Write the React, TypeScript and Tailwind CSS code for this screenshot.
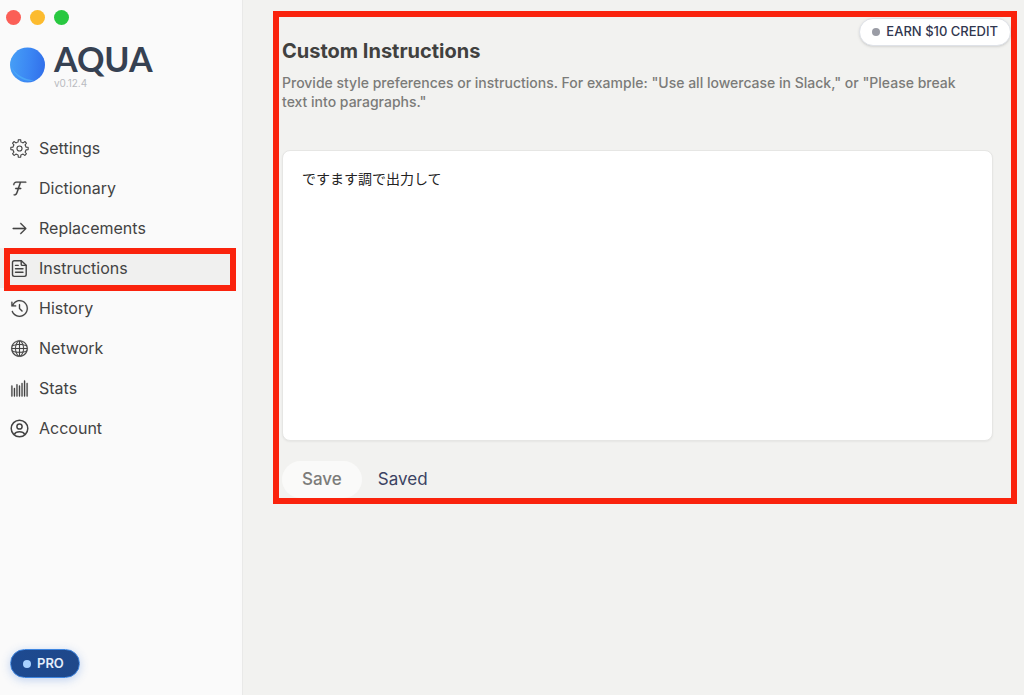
import type { ComponentType } from "react";
import {
  RxArrowRight,
  RxBarChart,
  RxCounterClockwiseClock,
  RxFontFamily,
  RxGlobe,
} from "react-icons/rx";

interface IconProps {
  className?: string;
}

interface NavItem {
  label: string;
  href: string;
  icon: ComponentType<IconProps>;
}

// outline of an eight-toothed gear, centered in a 24px box
const point = (radius: number, degrees: number) => {
  const rad = (degrees * Math.PI) / 180;
  return `${(12 + radius * Math.cos(rad)).toFixed(2)} ${(12 + radius * Math.sin(rad)).toFixed(2)}`;
};

const gearPath =
  [0, 45, 90, 135, 180, 225, 270, 315]
    .map(
      (a, i) =>
        `${i === 0 ? "M" : "L"}${point(8.4, a - 12)}L${point(11, a - 8)}A11 11 0 0 1 ${point(11, a + 8)}L${point(8.4, a + 12)}A8.4 8.4 0 0 1 ${point(8.4, a + 33)}`
    )
    .join("") + "Z";

function GearIcon({ className }: IconProps) {
  return (
    <svg className={className} viewBox="0 0 24 24" fill="none" stroke="currentColor" aria-hidden="true">
      <path d={gearPath} strokeWidth="1.4" strokeLinejoin="round" />
      <circle cx="12" cy="12" r="3.2" strokeWidth="1.4" />
    </svg>
  );
}

function DocumentIcon({ className }: IconProps) {
  return (
    <svg className={className} viewBox="0 0 19 19" fill="none" stroke="currentColor" aria-hidden="true">
      <g strokeWidth="1.4" strokeLinecap="round" strokeLinejoin="round">
        <path d="M4.3 1.7H11.4L16.2 6.2V15.6A1.8 1.8 0 0 1 14.4 17.4H4.3A1.8 1.8 0 0 1 2.5 15.6V3.5A1.8 1.8 0 0 1 4.3 1.7Z" />
        <path d="M11.2 2V5.2A1.2 1.2 0 0 0 12.4 6.4H16" />
        <path d="M5.5 6.4H8.2M5.5 9.8H13M5.5 13.2H13" />
      </g>
    </svg>
  );
}

function AccountIcon({ className }: IconProps) {
  return (
    <svg className={className} viewBox="0 0 19 19" fill="none" stroke="currentColor" aria-hidden="true">
      <g strokeWidth="1.5">
        <circle cx="9.5" cy="9.5" r="8.3" />
        <circle cx="9.5" cy="7.5" r="2.6" />
        <path d="M4.3 15.4C5.2 13.4 7.2 12.7 9.5 12.7C11.8 12.7 13.8 13.4 14.7 15.4" />
      </g>
    </svg>
  );
}

const navItems: NavItem[] = [
  { label: "Settings", href: "#settings", icon: GearIcon },
  { label: "Dictionary", href: "#dictionary", icon: RxFontFamily },
  { label: "Replacements", href: "#replacements", icon: RxArrowRight },
  { label: "Instructions", href: "#instructions", icon: DocumentIcon },
  { label: "History", href: "#history", icon: RxCounterClockwiseClock },
  { label: "Network", href: "#network", icon: RxGlobe },
  { label: "Stats", href: "#stats", icon: RxBarChart },
  { label: "Account", href: "#account", icon: AccountIcon },
];

function Logo() {
  return (
    <svg className="mt-1 size-9 shrink-0" viewBox="0 0 36 36" aria-hidden="true">
      <defs>
        <linearGradient id="orb" x1="0" y1="0.5" x2="1" y2="0.6">
          <stop offset="0" stopColor="#469ef6" />
          <stop offset="0.55" stopColor="#3b86f3" />
          <stop offset="1" stopColor="#316fea" />
        </linearGradient>
      </defs>
      <circle cx="17.5" cy="18" r="17.5" fill="url(#orb)" />
      <path
        d="M1.5 20C5 30 15 35.5 24 33.5C14 32 6 28 1.5 20Z"
        fill="#4fb0fa"
        opacity="0.7"
      />
    </svg>
  );
}

function Sidebar({ active }: { active: string }) {
  return (
    <aside className="flex w-[243px] shrink-0 flex-col border-r border-[#e9e9e8] bg-[#fafafa]">
      {/* window controls */}
      <div className="flex gap-[9px] px-1.5 pt-2.5">
        <button aria-label="Close" className="size-[15px] rounded-full bg-[#fb5f57]" />
        <button aria-label="Minimize" className="size-[15px] rounded-full bg-[#fcbb2e]" />
        <button aria-label="Zoom" className="size-[15px] rounded-full bg-[#28c840]" />
      </div>

      <div className="flex gap-2 px-2.5 pt-[18px]">
        <Logo />
        <div className="flex flex-col">
          <span className="font-[Lato,sans-serif] text-[34px] leading-8 font-bold text-[#364152]">
            AQUA
          </span>
          <span className="mt-0.5 text-[10px] leading-3 text-[#b9bbc0]">v0.12.4</span>
        </div>
      </div>

      <nav className="flex flex-col pt-[39px]">
        {navItems.map(({ label, href, icon: Icon }) => (
          <a
            key={label}
            href={href}
            aria-current={label === active ? "page" : undefined}
            className={`relative mr-1.5 flex h-10 items-center gap-2.5 px-2.5 text-[16px] text-[#434343] ${
              label === active ? "bg-[#f0f0ef]" : ""
            }`}
          >
            <Icon className="size-[19px] shrink-0 [stroke-width:0.1]" />
            {label}
            {label === active && (
              <span className="absolute top-0 right-0 -bottom-[3px] left-1 border-6 border-[#fa230d]" />
            )}
          </a>
        ))}
      </nav>

      <div className="mt-auto px-2.5 pb-[17px]">
        <button className="flex h-[29px] items-center gap-1.5 rounded-full border border-[#3f86e0] bg-linear-to-r from-[#1d4a91] to-[#1f488a] pr-[15px] pl-3 text-[13px] font-semibold text-[#e4eefb] shadow-[0_2px_10px_rgba(60,120,220,0.3)]">
          <span className="size-2 rounded-full bg-[#a9d2ff]" />
          PRO
        </button>
      </div>
    </aside>
  );
}

export default function App() {
  return (
    <div className="flex min-h-screen bg-[#f2f2f0] font-[Inter,'Noto_Sans_CJK_JP',sans-serif]">
      <Sidebar active="Instructions" />

      <main className="min-w-0 flex-1 pt-[11px] pr-[7px] pl-[30px]">
        <section className="relative border-6 border-[#fa230d] pt-5 pr-[18px] pl-[3px]">
          <button className="absolute top-px right-0 flex h-7 items-center gap-1.5 rounded-full border border-[#dfe2e8] bg-white px-3 text-[13px] font-medium text-[#31374f] shadow-sm">
            <span className="size-2 rounded-full bg-[#9a9ca5]" />
            EARN $10 CREDIT
          </button>

          <h1 className="text-[20px] leading-7 font-bold text-[#41413f]">
            <label htmlFor="instructions">Custom Instructions</label>
          </h1>
          <p className="mt-2 pr-5 text-[14px] leading-[19px] font-medium text-[#7b7b79]">
            Provide style preferences or instructions. For example: "Use all
            lowercase in Slack," or "Please break text into paragraphs."
          </p>

          <textarea
            id="instructions"
            defaultValue="ですます調で出力して"
            className="mt-[39px] block h-[291px] w-full resize-none rounded-lg border border-[#e6e6e4] bg-white px-[19px] py-[18px] text-[14px] leading-5 text-[#222222] shadow-xs outline-none"
          />

          <div className="mt-5 flex items-center gap-4">
            <button className="h-[37px] rounded-full bg-[#fafaf9] px-5 text-[17px] font-medium text-[#7c7c7a]">
              Save
            </button>
            <span className="text-[17px] text-[#3b4262]">Saved</span>
          </div>
        </section>
      </main>
    </div>
  );
}
